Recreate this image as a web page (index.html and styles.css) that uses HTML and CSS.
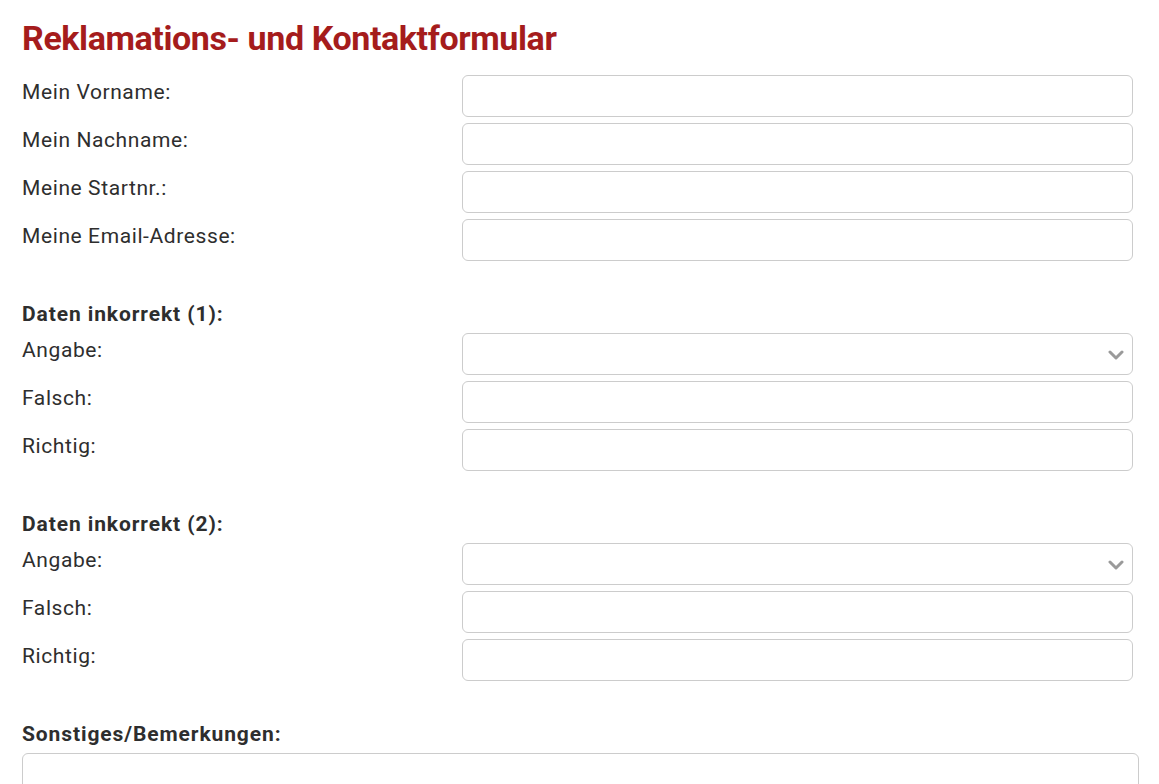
FILE: index.html
```html
<!DOCTYPE html>
<html lang="de">
<head>
<meta charset="utf-8">
<title>Reklamations- und Kontaktformular</title>
<link rel="stylesheet" href="styles.css">
</head>
<body>
<main class="page">
  <h1 class="title">Reklamations- und Kontaktformular</h1>
  <form class="form">
    <div class="group">
      <div class="row"><label class="label">Mein Vorname:</label><input class="field" type="text"></div>
      <div class="row"><label class="label">Mein Nachname:</label><input class="field" type="text"></div>
      <div class="row"><label class="label">Meine Startnr.:</label><input class="field" type="text"></div>
      <div class="row"><label class="label">Meine Email-Adresse:</label><input class="field" type="text"></div>
    </div>

    <div class="group section">
      <div class="heading">Daten inkorrekt (1):</div>
      <div class="row"><label class="label">Angabe:</label>
        <div class="select"><span class="chev"><svg width="16" height="10" viewBox="0 0 16 10"><path d="M2 2 L8 8 L14 2" fill="none" stroke="#9a9a9a" stroke-width="3" stroke-linecap="round" stroke-linejoin="round"/></svg></span></div>
      </div>
      <div class="row"><label class="label">Falsch:</label><input class="field" type="text"></div>
      <div class="row"><label class="label">Richtig:</label><input class="field" type="text"></div>
    </div>

    <div class="group section">
      <div class="heading">Daten inkorrekt (2):</div>
      <div class="row"><label class="label">Angabe:</label>
        <div class="select"><span class="chev"><svg width="16" height="10" viewBox="0 0 16 10"><path d="M2 2 L8 8 L14 2" fill="none" stroke="#9a9a9a" stroke-width="3" stroke-linecap="round" stroke-linejoin="round"/></svg></span></div>
      </div>
      <div class="row"><label class="label">Falsch:</label><input class="field" type="text"></div>
      <div class="row"><label class="label">Richtig:</label><input class="field" type="text"></div>
    </div>

    <div class="group section last">
      <div class="heading">Sonstiges/Bemerkungen:</div>
      <textarea class="area"></textarea>
    </div>
  </form>
</main>
</body>
</html>
```
FILE: styles.css
```css
* { box-sizing: border-box; }
html, body { margin: 0; padding: 0; background: #fff; }
body {
  font-family: Roboto, "Liberation Sans", Arial, sans-serif;
  color: #333;
  overflow: hidden;
}
.page {
  padding: 18px 20px 0 22px;
}
.title {
  margin: 0;
  font-size: 34px;
  line-height: 40px;
  font-weight: 700;
  color: #a51c1c;
  letter-spacing: -0.4px;
}
.form { margin-top: 17px; }
.group {
  display: flex;
  flex-direction: column;
  gap: 6px;
}
.section { margin-top: 39px; }
.row {
  display: grid;
  grid-template-columns: 440px 671px;
  align-items: start;
}
.label {
  font-size: 21px;
  line-height: 28px;
  padding-top: 3px;
  color: #2e2e2e;
  letter-spacing: 0.6px;
}
.heading {
  font-size: 21px;
  line-height: 28px;
  font-weight: 700;
  color: #2e2e2e;
  letter-spacing: 0.9px;
  margin-bottom: -1px;
}
.field, .select {
  display: block;
  width: 671px;
  height: 42px;
  border: 1px solid #ccc;
  border-radius: 6px;
  background: #fff;
  font: inherit;
  margin: 0;
  padding: 0 12px;
}
.select {
  position: relative;
}
.chev {
  position: absolute;
  right: 8px;
  top: 16px;
  line-height: 0;
}
.area {
  display: block;
  width: 1117px;
  height: 100px;
  border: 1px solid #ccc;
  border-radius: 6px;
  margin: 0;
  resize: none;
  font: inherit;
}
```
